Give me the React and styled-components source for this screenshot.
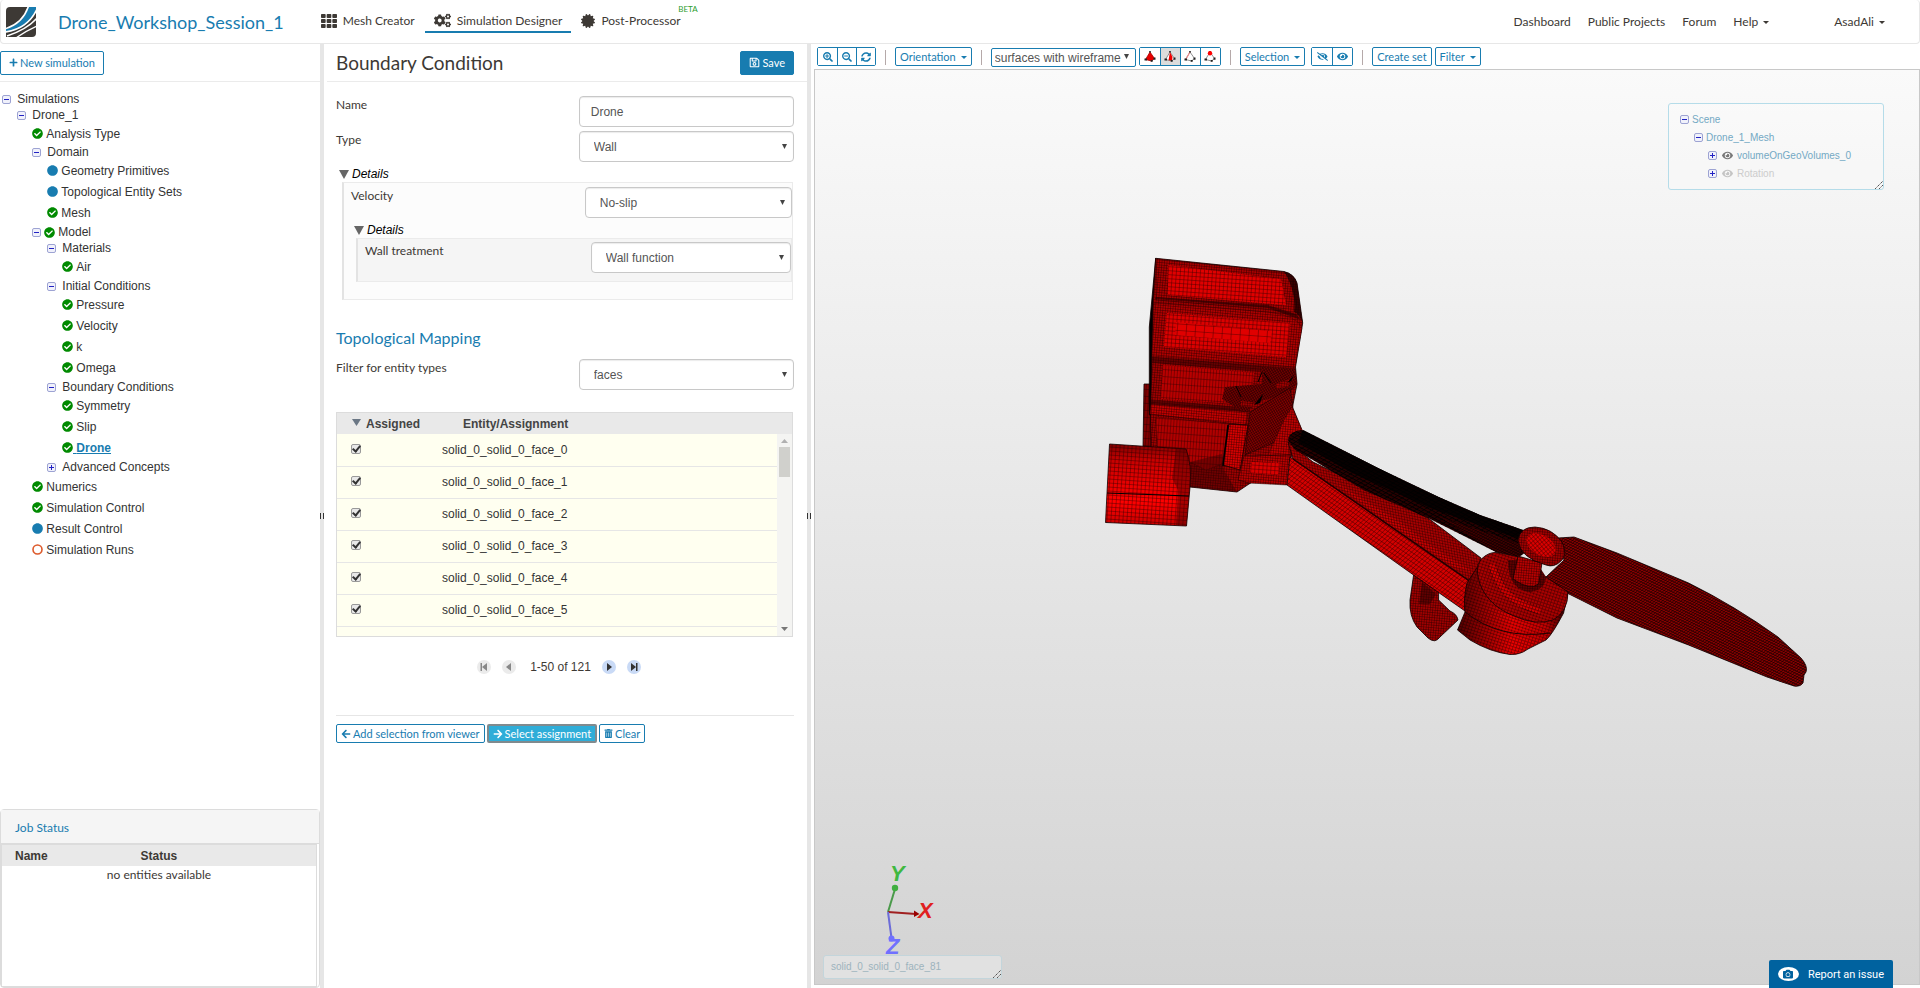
import { useState } from "react";
import styled, { createGlobalStyle, css } from "styled-components";
import {
  FaTh,
  FaCogs,
  FaCertificate,
  FaPlus,
  FaRegSave,
  FaCheckCircle,
  FaCircle,
  FaArrowLeft,
  FaArrowRight,
  FaTrashAlt,
  FaSearchPlus,
  FaSearchMinus,
  FaSyncAlt,
  FaEye,
  FaEyeSlash,
  FaCamera,
} from "react-icons/fa";

const tree = [
  {
    name: "Simulations",
    children: [
      {
        name: "Drone_1",
        children: [
          { name: "Analysis Type", status: "done" },
          {
            name: "Domain",
            children: [
              { name: "Geometry Primitives", status: "info" },
              { name: "Topological Entity Sets", status: "info" },
              { name: "Mesh", status: "done" },
            ],
          },
          {
            name: "Model",
            status: "done",
            children: [
              { name: "Materials", children: [{ name: "Air", status: "done" }] },
              {
                name: "Initial Conditions",
                children: [
                  { name: "Pressure", status: "done" },
                  { name: "Velocity", status: "done" },
                  { name: "k", status: "done" },
                  { name: "Omega", status: "done" },
                ],
              },
              {
                name: "Boundary Conditions",
                children: [
                  { name: "Symmetry", status: "done" },
                  { name: "Slip", status: "done" },
                  { name: "Drone", status: "done", active: true },
                ],
              },
              { name: "Advanced Concepts", closed: true },
            ],
          },
          { name: "Numerics", status: "done" },
          { name: "Simulation Control", status: "done" },
          { name: "Result Control", status: "info" },
          { name: "Simulation Runs", status: "open" },
        ],
      },
    ],
  },
];

const faces = [0, 1, 2, 3, 4, 5];

const StatusIcon = ({ status }) => {
  if (status === "done") return <FaCheckCircle color="#008a00" />;
  if (status === "info") return <FaCircle color="#187cb0" />;
  return (
    <svg viewBox="0 0 11 11" aria-hidden="true">
      <circle cx="5.500" cy="5.500" r="4.500" fill="none" stroke="#dd5a2b" strokeWidth="1.600" />
    </svg>
  );
};

const TreeNode = ({ node }) => {
  const folder = node.children || node.closed;
  return (
    <li>
      <TreeRow $folder={folder}>
        {folder && <Toggle aria-label={`Toggle ${node.name}`} $closed={node.closed} />}
        {node.status && <StatusIcon status={node.status} />}
        <TreeLink href="#" $active={node.active}>
          {"\u00a0"}
          {node.name}
        </TreeLink>
      </TreeRow>
      {node.children && (
        <TreeList>
          {node.children.map((child) => (
            <TreeNode key={child.name} node={child} />
          ))}
        </TreeList>
      )}
    </li>
  );
};

const Field = ({ id, label, options }) => (
  <FieldRow>
    <Label htmlFor={id}>{label}</Label>
    <SelectBox>
      <Select id={id}>
        {options.map((o) => (
          <option key={o}>{o}</option>
        ))}
      </Select>
      <Arrow />
    </SelectBox>
  </FieldRow>
);

const Arrow = () => (
  <ArrowSvg viewBox="0 0 6 6" aria-hidden="true">
    <path d="M0 0h6L3 6z" fill="#444" />
  </ArrowSvg>
);

const Triangle = () => (
  <svg width="10" height="9" viewBox="0 0 10 9" aria-hidden="true">
    <path d="M0 0h10L5 9z" fill="#666" />
  </svg>
);

const Logo = () => (
  <svg width="30" height="30" viewBox="0 0 30 30" aria-hidden="true">
    <clipPath id="logoClip">
      <path d="M4 0h26v26q0 4-4 4H0V4q0-4 4-4z" />
    </clipPath>
    <g clipPath="url(#logoClip)">
      <rect width="30" height="30" fill="#3d3935" />
      <path d="M0 22C12 19 19 11 22 0h8v2C26 15 15 24 0 25z" fill="#187cb0" />
      <path d="M0 21.500C11 18 19 10 22.500-1" fill="none" stroke="#fff" strokeWidth="1.600" />
      <path d="M-1 25C14 23 25 15 31 2" fill="none" stroke="#fff" strokeWidth="1.600" />
      <path d="M1 29C13 25 25 18 31 11" fill="none" stroke="#fff" strokeWidth="1.600" />
      <path d="M10 31C17 26 24 22 31 19" fill="none" stroke="#fff" strokeWidth="1.400" />
    </g>
  </svg>
);

// tetrahedron drawn on the pick mode buttons
const PickIcon = ({ mode }) => (
  <svg width="12" height="11" viewBox="0 0 12 11" aria-hidden="true">
    <path
      d="M6 1L1.500 8.500 7.500 10 10.500 7.500z"
      fill={mode === "volume" ? "#e80000" : "#fff"}
      stroke={mode === "volume" ? "#a00" : "#777"}
      strokeWidth=".8"
    />
    {mode === "face" && <path d="M6 1L4.500 9.200 8 9.800 8.500 6z" fill="#f00000" />}
    {mode === "edge" && <path d="M6 1L2 8" stroke="#e88" strokeWidth="1.200" />}
    <path d="M.5 7.500h2.500v2H.5zM6.700 9h2v1.800h-2zM9.500 6.500h2v2.300h-2zM5.200 0h1.600v1.500H5.200z" fill="#222" />
    {mode === "point" && <circle cx="6" cy="2.300" r="2.200" fill="#f00" />}
  </svg>
);

const PagerIcon = ({ end, back }) => (
  <svg width="8" height="8" viewBox="0 0 8 8" aria-hidden="true">
    <g transform={back ? "matrix(-1 0 0 1 8 0)" : undefined} fill="currentColor">
      <path d={end ? "M1 0l5 4-5 4z" : "M2 0l5 4-5 4z"} />
      {end && <path d="M6 0h1.500v8H6z" />}
    </g>
  </svg>
);

const Grip = () => (
  <GripSvg viewBox="0 0 9 9" aria-hidden="true">
    <path d="M1 9L9 1M5 9L9 5" stroke="#555" strokeWidth="1" strokeDasharray="1.500 .6" />
  </GripSvg>
);

const Grid = ({ id, w, h, angle, skew = 0, line = 0.7, alpha = 0.8 }) => (
  <pattern
    id={id}
    width={w}
    height={h}
    patternUnits="userSpaceOnUse"
    patternTransform={`rotate(${angle}) skewX(${skew})`}
  >
    <path d={`M0 0H${w}M0 0V${h}`} stroke="#000" strokeWidth={line * 2} opacity={alpha} />
  </pattern>
);

const Part = ({ d, fill, grid, edge = 0.8 }) => (
  <g>
    <path d={d} fill={fill} stroke="#100" strokeWidth={edge} strokeLinejoin="round" />
    {grid && <path d={d} fill={`url(#${grid})`} />}
  </g>
);

const DroneModel = () => (
  <ModelSvg viewBox="815 70 1104 914" preserveAspectRatio="xMidYMid meet" role="img" aria-label="Drone mesh">
    <defs>
      <Grid id="coarse" w={9} h={6.5} angle={4} line={0.4} alpha={0.75} />
      <Grid id="medium" w={4} h={4} angle={4} line={0.4} alpha={0.8} />
      <Grid id="fine" w={2.5} h={2.5} angle={5} line={0.4} alpha={0.75} />
      <Grid id="tall" w={3} h={7} angle={4} line={0.4} alpha={0.75} />
      <Grid id="dense" w={2.2} h={2.2} angle={-32} line={0.45} alpha={0.75} />
      <Grid id="arm" w={3.2} h={4} angle={34} skew={-12} line={0.4} alpha={0.75} />
      <Grid id="armTop" w={2.8} h={2.6} angle={12} skew={20} line={0.4} alpha={0.75} />
      <Grid id="blade" w={2.6} h={2.4} angle={26} skew={-25} line={0.55} alpha={0.85} />
      <Grid id="round" w={3.2} h={3} angle={18} line={0.4} alpha={0.75} />
      <Grid id="speckle" w={5} h={3} angle={28} skew={-30} line={0.9} alpha={1} />
      <linearGradient id="cylinder" x1="0" y1="0" x2="0" y2="1">
        <stop offset="0" stopColor="#800000" />
        <stop offset=".2" stopColor="#c80000" />
        <stop offset=".7" stopColor="#ff0000" />
        <stop offset="1" stopColor="#c80000" />
      </linearGradient>
      <linearGradient id="motor" x1="0" y1="0" x2="1" y2="0">
        <stop offset="0" stopColor="#500000" />
        <stop offset=".5" stopColor="#e80000" />
        <stop offset=".8" stopColor="#c00000" />
        <stop offset="1" stopColor="#300000" />
      </linearGradient>
    </defs>

    {/* fuselage */}
    <Part d="M1144 384H1151L1152 448 1143 447Z" fill="#800000" grid="tall" />
    <Part d="M1155.700 258L1149.300 327 1149.300 415 1156 415 1160 300Z" fill="#000" />
    <Part
      d="M1155.700 258.300L1284 271.500Q1294 274 1297 283L1302.700 323 1295.500 367 1297 384 1292.500 407 1302 430 1290 460 1249 484 1237 492 1190 487 1151 448 1150.500 415 1153 300Z"
      fill="#a00000"
      grid="fine"
    />
    <Part d="M1157 259L1284 272.500Q1292 275 1293 283L1298 315 1268 309 1156 300Z" fill="#a80000" grid="fine" edge={0.3} />
    <Part d="M1168 265L1281 279 1286 305 1262 303 1168 295Z" fill="#e00000" grid="medium" edge={0} />
    <path d="M1284 271.500Q1294 273 1297 283L1302.500 322Q1298 313 1294 312Q1296 290 1284 271.500Z" fill="#100" opacity=".7" />
    <path d="M1155 299L1268 308 1301 320 1296 314 1268 305 1156 297Z" fill="#200" opacity=".6" />
    <Part d="M1154 303L1268 312Q1298 316 1302 328L1295 367 1152 356Z" fill="#b00000" grid="fine" edge={0.3} />
    <Part d="M1167 313L1290 323 1286 357 1164 347Z" fill="#dc0000" grid="medium" edge={0} />
    <path d="M1176 322L1272 331 1270 343 1175 335Z" fill="#e00000" />
    <path d="M1176 322L1272 331 1270 343 1175 335Z" fill="url(#coarse)" />
    <path d="M1152 357L1295 368 1296 374 1152 363Z" fill="#200" opacity=".45" />
    <Part d="M1163 365L1254 373 1250 405 1161 399Z" fill="#b80000" grid="tall" edge={0} />
    <path d="M1151 400L1250 408 1250 412 1151 404Z" fill="#200" opacity=".5" />
    <path d="M1262 367L1295 369 1297 384 1290 393 1257 402 1246 414 1222 399 1225 387 1262 384Z" fill="#700000" />
    <path d="M1262 367L1295 369 1297 384 1290 393 1257 402 1246 414 1222 399 1225 387 1262 384Z" fill="url(#dense)" />
    <path d="M1241 401L1257 403 1254 407 1241 406ZM1276 384L1290 379 1288 387 1276 388Z" fill="#a00000" />
    <path d="M1241 401L1257 403 1254 407 1241 406ZM1276 384L1290 379 1288 387 1276 388Z" fill="url(#fine)" />
    <path d="M1254 405L1263 394 1260 403ZM1287 383L1294 375 1291 381Z" fill="#000" />
    <path d="M1264 373L1271 383M1236 386L1241 397M1262 372L1258 382" stroke="#000" strokeWidth="1" />
    <Part d="M1151 404L1248 412 1246 425 1150 414Z" fill="#c40000" grid="fine" edge={0.5} />
    <Part d="M1156 417L1229 424 1222 464 1206 470 1190 462 1157 447Z" fill="#b00000" grid="tall" edge={0.3} />
    <Part d="M1250 412L1290 388 1293 407 1280 440 1245 455Z" fill="#800000" grid="dense" edge={0.5} />
    <Part d="M1292 407L1302 430 1288 440 1290 455 1268 455 1276 438 1284 420Z" fill="#c00000" grid="fine" edge={0.3} />
    <path d="M1190 462L1222 454 1224 470 1237 492 1190 487Z" fill="#300" opacity=".45" />
    <Part d="M1229 424L1248 425 1240 470 1223 465Z" fill="#d80000" grid="fine" />
    <path d="M1228 425L1223 466" stroke="#000" strokeWidth="1.500" />
    <Part d="M1244 456L1290 455 1287 485 1249 483 1238 480Z" fill="#b80000" grid="fine" edge={0.5} />
    <path d="M1252 462L1280 463 1278 475 1250 473Z" fill="#d80000" />
    <path d="M1252 462L1280 463 1278 475 1250 473Z" fill="url(#medium)" />

    {/* camera barrel */}
    <Part d="M1109.500 444L1186 449Q1192 465 1190 487L1186.500 526 1105.500 522.500Z" fill="url(#cylinder)" grid="medium" />
    <path d="M1176 448L1186 449Q1192 465 1190 487L1186.500 526 1176 525 1178 490 1172 478Z" fill="#400" opacity=".45" />
    <path d="M1107 493L1189 496" stroke="#000" strokeWidth="1" />

    {/* arm */}
    <Part d="M1293 459L1288 442 1313 462 1428 518 1481 558 1478 580 1471 583Z" fill="#a80000" grid="armTop" />
    <path d="M1335 482L1400 522 1425 542 1474 573 1452 566 1390 525Z" fill="#e00000" opacity=".6" />
    <path d="M1335 482L1400 522 1425 542 1474 573 1452 566 1390 525Z" fill="url(#armTop)" />
    <Part d="M1413.600 575L1410 600Q1409 616 1417 627L1428 638Q1435 644 1440 637L1458 620Q1457 614 1450 611L1438.600 600 1438.600 592Z" fill="#a00000" grid="fine" />
    <path d="M1422 582L1436 594 1430 604 1419 604Z" fill="#200" opacity=".5" />
    <Part d="M1290 457L1293 459 1471 582 1465 611 1413.600 575 1287 485Z" fill="#d40000" grid="arm" />
    <path d="M1293 459L1471 582" stroke="#200" strokeWidth="1.500" />

    {/* left blade */}
    <path
      d="M1288 440Q1289 431 1303 430L1378 468 1438.600 497 1480 515 1523 530 1526 552 1519 557 1496 552 1428 518 1363.500 490 1313 460 1295 450Z"
      fill="#2a0000"
    />
    <path
      d="M1288 440Q1289 431 1303 430L1378 468 1438.600 497 1480 515 1523 530 1526 552 1519 557 1496 552 1428 518 1363.500 490 1313 460 1295 450Z"
      fill="url(#speckle)"
    />
    <path d="M1303 430L1378 468 1438.600 497 1480 515 1523 530 1522 540 1430 508 1350 472 1298 442Z" fill="#000" opacity=".8" />
    <path d="M1440 517L1523 545 1519 557 1496 552Z" fill="#400000" />
    <path d="M1440 517L1523 545 1519 557 1496 552Z" fill="url(#blade)" />

    {/* right blade */}
    <Part
      d="M1546 577L1564 560 1558 538 1574 537 1617 553 1688.600 583Q1735 606 1778 637L1801 658Q1808 666 1806 672L1804 675 1803 683Q1800 687 1794 686L1767 677 1688.600 645 1617 618 1567 593Z"
      fill="#8a0000"
      grid="blade"
    />

    {/* motor */}
    <Part
      d="M1478 566L1467 583Q1463 600 1465 612L1457.500 630 1470 640Q1490 652 1510 654.500 1520 655 1528 649L1546 640Q1552 635 1563.600 613L1568 592Z"
      fill="url(#motor)"
      grid="round"
    />
    <path d="M1465 612Q1500 640 1550 633" fill="none" stroke="#200" strokeWidth="1" />
    <Part
      d="M1478 577Q1475 562 1485 556 1492 551 1500 553L1519 557 1546 577 1568 592Q1568 612 1553 620 1536 626 1514 616 1484 604 1478 577Z"
      fill="#a80000"
      grid="round"
    />
    <path d="M1492 564Q1500 600 1540 611" fill="none" stroke="#f00000" strokeWidth="6" opacity=".6" />
    <path d="M1492 564Q1500 600 1540 611" fill="none" stroke="url(#round)" strokeWidth="8" />
    <path d="M1508 560Q1508 590 1530 592 1545 590 1546 577L1535 560Z" fill="#600000" />
    <path d="M1508 560Q1508 590 1530 592 1545 590 1546 577L1535 560Z" fill="url(#fine)" />
    <Part d="M1518 556L1542 563 1538.600 584Q1530 591 1513 579Z" fill="#b80000" grid="fine" />
    <Part
      d="M1518 540Q1520 527 1535 527 1552 528 1562 542 1568 555 1561 561 1554 568 1546 565 1520 558 1518 540Z"
      fill="#a00000"
      grid="fine"
    />
    <ellipse cx="1541" cy="545" rx="16" ry="10" fill="#dc0000" transform="rotate(32 1541 545)" />
    <ellipse cx="1541" cy="545" rx="16" ry="10" fill="url(#round)" transform="rotate(32 1541 545)" />

    {/* axis triad */}
    <g strokeWidth="2" fontFamily="Liberation Sans" fontWeight="700" fontStyle="italic" fontSize="22">
      <path d="M888 912L895 889" stroke="#4a9a4a" />
      <path d="M888 912L916 914" stroke="#a02020" />
      <path d="M888 912L891.500 938" stroke="#6c6cd8" />
      <circle cx="895" cy="888" r="3.200" fill="#3fae3f" />
      <path d="M914 910.500L919.500 914 914 917Z" fill="#900" />
      <circle cx="891.500" cy="938.500" r="3" fill="#7070ff" />
      <text x="890" y="881" fill="#40b840">Y</text>
      <text x="918" y="918" fill="#e02020">X</text>
      <text x="886" y="954" fill="#7070ff">Z</text>
    </g>
  </ModelSvg>
);

const App = () => {
  const [name, setName] = useState("Drone");
  return (
    <Page>
      <GlobalStyle />
      <Header>
        <Logo />
        <ProjectTitle>Drone_Workshop_Session_1</ProjectTitle>
        <Tabs>
          <Tab href="#">
            <FaTh size={16} />
            Mesh Creator
          </Tab>
          <Tab href="#" $active>
            <FaCogs size={17} />
            Simulation Designer
          </Tab>
          <Tab href="#">
            <FaCertificate size={14} />
            Post-Processor
            <Beta>BETA</Beta>
          </Tab>
        </Tabs>
        <UserNav>
          <NavLink href="#">Dashboard</NavLink>
          <NavLink href="#">Public Projects</NavLink>
          <NavLink href="#">Forum</NavLink>
          <NavLink href="#">
            Help
            <Caret />
          </NavLink>
          <NavLink href="#" $last>
            AsadAli
            <Caret />
          </NavLink>
        </UserNav>
      </Header>

      <Main>
        <Sidebar>
          <PanelHead>
            <Button $large>
              <FaPlus size={9} />
              New simulation
            </Button>
          </PanelHead>
          <TreeRoot>
            {tree.map((node) => (
              <TreeNode key={node.name} node={node} />
            ))}
          </TreeRoot>
          <JobPanel>
            <JobTitle>Job Status</JobTitle>
            <JobBody>
              <JobTable>
                <thead>
                  <tr>
                    <th>Name</th>
                    <th>Status</th>
                  </tr>
                </thead>
                <tbody>
                  <tr>
                    <td colSpan={2}>no entities available</td>
                  </tr>
                </tbody>
              </JobTable>
            </JobBody>
          </JobPanel>
        </Sidebar>
        <Splitter />

        <Settings>
          <PanelHead $inset>
            <PanelTitle>Boundary Condition</PanelTitle>
            <Button $large $primary>
              <FaRegSave size={11} />
              Save
            </Button>
          </PanelHead>
          <Form onSubmit={(e) => e.preventDefault()}>
            <FieldRow>
              <Label htmlFor="name">Name</Label>
              <TextInput id="name" value={name} onChange={(e) => setName(e.target.value)} />
            </FieldRow>
            <Field id="type" label="Type" options={["Wall"]} />
            <DetailsTitle>
              <Triangle />
              Details
            </DetailsTitle>
            <DetailsBox>
              <Field id="velocity" label="Velocity" options={["No-slip"]} />
              <DetailsTitle>
                <Triangle />
                Details
              </DetailsTitle>
              <DetailsBox $inner>
                <Field id="treatment" label="Wall treatment" options={["Wall function"]} />
              </DetailsBox>
            </DetailsBox>

            <SectionTitle>Topological Mapping</SectionTitle>
            <Field id="filter" label="Filter for entity types" options={["faces"]} />
            <EntityBox>
              <EntityTable>
                <thead>
                  <tr>
                    <th>
                      <svg width="9" height="7" viewBox="0 0 9 7" aria-hidden="true">
                        <path d="M0 0h9L4.500 7z" fill="#6b7785" />
                      </svg>
                      Assigned
                    </th>
                    <th>Entity/Assignment</th>
                  </tr>
                </thead>
                <tbody>
                  {faces.map((n) => (
                    <tr key={n}>
                      <td>
                        <Check type="checkbox" id={`face${n}`} defaultChecked />
                      </td>
                      <td>
                        <label htmlFor={`face${n}`}>{`solid_0_solid_0_face_${n}`}</label>
                      </td>
                    </tr>
                  ))}
                  <tr>
                    <td>
                      <Check type="checkbox" aria-label="Next face" defaultChecked />
                    </td>
                    <td />
                  </tr>
                </tbody>
              </EntityTable>
              <ScrollTrack>
                <svg width="7" height="4" viewBox="0 0 7 4">
                  <path d="M0 4h7L3.500 0z" fill="#b0b0b0" />
                </svg>
                <Thumb />
                <svg width="7" height="4" viewBox="0 0 7 4">
                  <path d="M0 0h7L3.500 4z" fill="#777" />
                </svg>
              </ScrollTrack>
            </EntityBox>
            <Pager>
              <PagerButton aria-label="First page" disabled>
                <PagerIcon end back />
              </PagerButton>
              <PagerButton aria-label="Previous page" disabled>
                <PagerIcon back />
              </PagerButton>
              <PagerText>1-50 of 121</PagerText>
              <PagerButton aria-label="Next page">
                <PagerIcon />
              </PagerButton>
              <PagerButton aria-label="Last page">
                <PagerIcon end />
              </PagerButton>
            </Pager>
            <Actions>
              <Button>
                <FaArrowLeft size={10} />
                Add selection from viewer
              </Button>
              <Button $pressed>
                <FaArrowRight size={10} />
                Select assignment
              </Button>
              <Button>
                <FaTrashAlt size={9} />
                Clear
              </Button>
            </Actions>
          </Form>
        </Settings>
        <Splitter />

        <Viewer>
          <Toolbar>
            <Group $size={19}>
              <button aria-label="Zoom in">
                <FaSearchPlus size={10} />
              </button>
              <button aria-label="Zoom out">
                <FaSearchMinus size={10} />
              </button>
              <button aria-label="Reset view">
                <FaSyncAlt size={10} />
              </button>
            </Group>
            <Separator />
            <Button>
              Orientation
              <Caret />
            </Button>
            <Separator />
            <ModeBox>
              <ModeSelect aria-label="Render mode">
                <option>surfaces with wireframe</option>
              </ModeSelect>
              <Arrow />
            </ModeBox>
            <Group $size={20}>
              <button aria-label="Pick volumes">
                <PickIcon mode="volume" />
              </button>
              <button aria-label="Pick faces" aria-pressed="true">
                <PickIcon mode="face" />
              </button>
              <button aria-label="Pick edges">
                <PickIcon mode="edge" />
              </button>
              <button aria-label="Pick points">
                <PickIcon mode="point" />
              </button>
            </Group>
            <Separator />
            <Button>
              Selection
              <Caret />
            </Button>
            <Group $size={20} $spaced>
              <button aria-label="Hide selection">
                <FaEyeSlash size={11} />
              </button>
              <button aria-label="Show all">
                <FaEye size={11} />
              </button>
            </Group>
            <Separator />
            <Button>Create set</Button>
            <Button>
              Filter
              <Caret />
            </Button>
          </Toolbar>
          <Canvas>
            <DroneModel />
            <ScenePanel>
              <SceneRow $level={0}>
                <Toggle aria-label="Toggle scene" />
                Scene
              </SceneRow>
              <SceneRow $level={1}>
                <Toggle aria-label="Toggle mesh" />
                Drone_1_Mesh
              </SceneRow>
              <SceneRow $level={2}>
                <Toggle aria-label="Toggle volume" $closed />
                <FaEye size={11} color="#777" />
                volumeOnGeoVolumes_0
              </SceneRow>
              <SceneRow $level={2} $muted>
                <Toggle aria-label="Toggle rotation" $closed />
                <FaEye size={11} color="#c4c4c4" />
                Rotation
              </SceneRow>
              <Grip />
            </ScenePanel>
            <PickedEntity>
              solid_0_solid_0_face_81
              <Grip />
            </PickedEntity>
          </Canvas>
        </Viewer>
      </Main>

      <ReportButton>
        <ReportBubble>
          <FaCamera size={10} />
        </ReportBubble>
        Report an issue
      </ReportButton>
    </Page>
  );
};

const GlobalStyle = createGlobalStyle`
  *, *::before, *::after {
    box-sizing: border-box;
  }
  body {
    margin: 0;
    background: #fff;
    color: #3d3935;
    font-family: Lato, sans-serif;
    font-size: 12px;
  }
  button, input, select {
    font: inherit;
    margin: 0;
  }
  ul {
    list-style: none;
    margin: 0;
    padding: 0;
  }
  a {
    color: inherit;
    text-decoration: none;
  }
  svg {
    flex: none;
  }
`;

const Page = styled.div`
  display: flex;
  flex-direction: column;
  min-height: 100vh;
`;

const Header = styled.header`
  display: flex;
  align-items: center;
  height: 44px;
  padding: 0 34px 0 5px;
  border: 1px solid #e7e7e7;
  border-top: 0;
  border-radius: 4px;
`;

const ProjectTitle = styled.h1`
  margin: 0 28px 0 22px;
  color: #187cb0;
  font-size: 18px;
  font-weight: 400;
  line-height: 24px;
`;

const Tabs = styled.nav`
  display: flex;
  gap: 1px;
`;

const Tab = styled.a`
  position: relative;
  display: flex;
  align-items: center;
  gap: 6px;
  height: 22px;
  padding: 0 9px;
  border-bottom: 2px solid ${(p) => (p.$active ? "#187cb0" : "transparent")};
`;

const Beta = styled.span`
  position: absolute;
  right: -8px;
  top: -7px;
  color: #2e9e2e;
  font-size: 8px;
  line-height: 10px;
`;

const UserNav = styled.nav`
  display: flex;
  gap: 17px;
  margin-left: auto;
`;

const NavLink = styled.a`
  display: flex;
  align-items: center;
  gap: 5px;
  margin-left: ${(p) => (p.$last ? "48px" : "0")};
`;

const Caret = styled.span`
  border: 3px solid transparent;
  border-top-color: currentColor;
  border-bottom: 0;
  margin-top: 2px;
`;

const Main = styled.main`
  display: flex;
  flex: 1;
`;

const Sidebar = styled.aside`
  display: flex;
  flex-direction: column;
  flex: 0 0 320px;
`;

const Splitter = styled.div`
  display: flex;
  align-items: center;
  flex: 0 0 4px;
  background: #e6e6e6;

  &::after {
    content: "";
    width: 4px;
    height: 6px;
    border: solid #333;
    border-width: 0 1px;
  }
`;

const PanelHead = styled.div`
  display: flex;
  align-items: center;
  justify-content: space-between;
  height: 38px;
  margin-left: ${(p) => (p.$inset ? "3px" : "0")};
  padding: ${(p) => (p.$inset ? "0 13px 0 9px" : "0")};
  border-bottom: 1px solid #ebebeb;
`;

const PanelTitle = styled.h2`
  margin: 0;
  font-size: 19px;
  font-weight: 400;
  line-height: 24px;
`;

const Button = styled.button`
  display: inline-flex;
  align-items: center;
  gap: 2px;
  height: 19px;
  padding: 0 4px;
  border: 1px solid #187cb0;
  border-radius: 2px;
  background: #fff;
  color: #187cb0;
  font-size: 11px;
  white-space: nowrap;

  ${Caret} {
    margin-left: 3px;
  }

  ${(p) =>
    p.$large &&
    css`
      height: 24px;
      padding: 0 8px;
    `}

  ${(p) =>
    p.$primary &&
    css`
      background: #187cb0;
      color: #fff;
    `}

  ${(p) =>
    p.$pressed &&
    css`
      border: 2px solid #808a8e;
      background: #2fadd8;
      color: #fff;
    `}
`;

const TreeRoot = styled.ul`
  flex: 1;
  padding: 9px 0 0 2px;
  font-family: "Liberation Sans", sans-serif;
`;

const TreeList = styled.ul`
  padding: 0 0 1px 15px;
`;

const TreeRow = styled.div`
  display: flex;
  align-items: center;
  height: ${(p) => (p.$folder ? "16px" : "21px")};

  svg {
    width: 11px;
    height: 11px;
  }
`;

const Toggle = styled.button`
  position: relative;
  flex: none;
  width: 9px;
  height: 9px;
  margin-right: 3px;
  padding: 0;
  border: 1px solid #9da3d3;
  border-radius: 2px;
  background: #f0f1fb;

  &::before,
  &::after {
    content: "";
    position: absolute;
    left: 1px;
    top: 3px;
    width: 5px;
    height: 1px;
    background: #2222c4;
  }

  &::after {
    transform: rotate(90deg);
    display: ${(p) => (p.$closed ? "block" : "none")};
  }
`;

const TreeLink = styled.a`
  color: ${(p) => (p.$active ? "#187cb0" : "#333")};
  font-weight: ${(p) => (p.$active ? "700" : "400")};
  text-decoration: ${(p) => (p.$active ? "underline" : "none")};
`;

const JobPanel = styled.section`
  display: flex;
  flex-direction: column;
  height: 179px;
  border: 1px solid #dcdcdc;
  border-radius: 4px;
`;

const JobTitle = styled.h3`
  margin: 0;
  padding: 2px 14px 0;
  border-bottom: 1px solid #dcdcdc;
  background: #f5f5f5;
  color: #187cb0;
  font-size: 12px;
  font-weight: 400;
  line-height: 31px;
`;

const JobBody = styled.div`
  flex: 1;
  margin-right: 2px;
  border: 1px solid #dcdcdc;
`;

const JobTable = styled.table`
  width: 100%;
  border-collapse: collapse;
  table-layout: fixed;

  th {
    height: 21px;
    padding: 0 13px;
    background: #e9e9e9;
    font-family: "Liberation Sans", sans-serif;
    text-align: left;
  }

  th:first-child {
    width: 40%;
  }

  td {
    padding: 1px 0;
    text-align: center;
  }
`;

const Settings = styled.section`
  flex: 0 0 483px;
`;

const Form = styled.form`
  padding: 14px 13px 0 12px;
`;

const FieldRow = styled.div`
  display: flex;
  align-items: flex-start;
  justify-content: space-between;
  margin-bottom: 4px;
`;

const Label = styled.label`
  line-height: 17px;
`;

const control = css`
  width: 100%;
  height: 31px;
  border: 1px solid #c8c8c8;
  border-radius: 4px;
  background: #fff;
  box-shadow: inset 0 1px 1px rgba(0, 0, 0, 0.08);
  color: #555;
  font-family: "Liberation Sans", sans-serif;
  appearance: none;
`;

const TextInput = styled.input`
  ${control}
  width: 47%;
  padding: 0 11px;
`;

const SelectBox = styled.div`
  position: relative;
  width: 47%;
`;

const Select = styled.select`
  ${control}
  padding: 0 14px;
`;

const ArrowSvg = styled.svg`
  position: absolute;
  right: 7px;
  top: calc(50% - 3px);
  width: 5px;
  height: 5px;
  pointer-events: none;
`;

const DetailsTitle = styled.div`
  display: flex;
  align-items: center;
  gap: 3px;
  height: 16px;
  margin-left: 3px;
  color: #000;
  font-family: "Liberation Sans", sans-serif;
  font-style: italic;
`;

const DetailsBox = styled.div`
  margin: 0 1px 0 6px;
  padding: 4px 0 17px 7px;
  border: 1px solid #ebebeb;
  border-left: 2px solid #e3e3e3;
  background: #fcfcfc;

  ${(p) =>
    p.$inner &&
    css`
      margin: 0 0 0 5px;
      padding: 3px 0 4px 7px;
      background: #f5f5f5;
    `}
`;

const SectionTitle = styled.h3`
  margin: 26px 0 9px;
  color: #187cb0;
  font-size: 16px;
  font-weight: 400;
  line-height: 24px;
`;

const EntityBox = styled.div`
  position: relative;
  height: 225px;
  margin: 22px 1px 0 0;
  overflow: hidden;
  border: 1px solid #dcdcdc;
`;

const EntityTable = styled.table`
  width: 100%;
  border-collapse: collapse;
  table-layout: fixed;
  color: #333;
  font-family: "Liberation Sans", sans-serif;

  th {
    height: 21px;
    padding: 0;
    background: #e9e9e9;
    color: #444;
    text-align: left;
  }

  th:first-child {
    width: 105px;
    padding-left: 15px;
  }

  th svg {
    margin: 0 5px 2px 0;
  }

  th:last-child {
    padding-left: 21px;
  }

  tbody tr {
    height: 32px;
    border-bottom: 1px solid #e6e6e6;
    background: #fffff0;
  }

  td {
    padding: 0;
  }

  td:first-child {
    padding: 0 0 2px 14px;
  }
`;

const Check = styled.input`
  position: relative;
  display: block;
  width: 10px;
  height: 10px;
  border: 1px solid #999;
  border-radius: 2px;
  background: #e8e8e8;
  appearance: none;

  &:checked::after {
    content: "";
    position: absolute;
    left: 2px;
    top: -1px;
    width: 5px;
    height: 8px;
    border: solid #333;
    border-width: 0 2px 2px 0;
    transform: rotate(40deg);
  }
`;

const ScrollTrack = styled.div`
  position: absolute;
  right: 0;
  top: 21px;
  bottom: 0;
  display: flex;
  flex-direction: column;
  align-items: center;
  width: 15px;
  padding: 5px 0;
  background: #f4f4f2;
`;

const Thumb = styled.div`
  width: 11px;
  height: 30px;
  margin: 4px 0 auto;
  background: #d0d0cc;
`;

const Pager = styled.div`
  display: flex;
  align-items: center;
  justify-content: center;
  gap: 11px;
  margin-top: 23px;
  padding-right: 12px;
`;

const PagerButton = styled.button`
  display: flex;
  align-items: center;
  justify-content: center;
  width: 14px;
  height: 14px;
  padding: 0;
  border: 0;
  border-radius: 50%;
  background: #c9daf6;
  color: #333;

  &:disabled {
    background: #ebebeb;
    color: #888;
  }
`;

const PagerText = styled.span`
  margin-left: 3px;
  font-family: "Liberation Sans", sans-serif;
`;

const Actions = styled.div`
  display: flex;
  gap: 2px;
  margin-top: 41px;
  padding-top: 8px;
  border-top: 1px solid #e6e6e6;
`;

const Viewer = styled.section`
  display: flex;
  flex-direction: column;
  flex: 1;
  min-width: 0;
  padding: 3px 0 3px 3px;
`;

const Toolbar = styled.div`
  display: flex;
  align-items: flex-start;
  gap: 3px;
  height: 22px;
  padding-left: 3px;
`;

const Group = styled.div`
  display: flex;
  border: 1px solid #187cb0;
  border-radius: 2px;
  margin-left: ${(p) => (p.$spaced ? "3px" : "0")};

  button {
    display: flex;
    align-items: center;
    justify-content: center;
    width: ${(p) => p.$size}px;
    height: 17px;
    padding: 0;
    border: 0;
    background: #fff;
    color: #187cb0;
  }

  button + button {
    border-left: 1px solid #187cb0;
  }

  button[aria-pressed="true"] {
    background: #dcdcdc;
  }
`;

const Separator = styled.span`
  width: 1px;
  height: 15px;
  margin: 3px 6px 0;
  background: #b5a9a9;
`;

const ModeBox = styled.div`
  position: relative;
  padding-top: 1px;
`;

const ModeSelect = styled.select`
  height: 19px;
  padding: 0 13px 0 3px;
  border: 1px solid #187cb0;
  border-radius: 2px;
  background: #fff;
  color: #555;
  font-family: "Liberation Sans", sans-serif;
  appearance: none;
`;

const Canvas = styled.div`
  position: relative;
  flex: 1;
  border: 1px solid #c8c8c8;
  background: linear-gradient(#fafafa, #d3d3d3);
`;

const ModelSvg = styled.svg`
  position: absolute;
  width: 100%;
  height: 100%;
`;

const GripSvg = styled.svg`
  position: absolute;
  right: 0;
  bottom: 0;
  width: 9px;
  height: 9px;
`;

const overlay = css`
  position: absolute;
  border: 1px solid #b5dce9;
  border-radius: 3px;
  font-family: "Liberation Sans", sans-serif;
  font-size: 10px;
`;

const ScenePanel = styled.div`
  ${overlay}
  top: 33px;
  right: 35px;
  width: 216px;
  padding: 6px 11px 7px;
  background: rgba(255, 255, 255, 0.2);
`;

const SceneRow = styled.div`
  display: flex;
  align-items: center;
  height: 18px;
  padding-left: ${(p) => p.$level * 14}px;
  color: ${(p) => (p.$muted ? "#ccc" : "#74a9c4")};

  svg {
    margin: 0 4px 0 2px;
  }
`;

const PickedEntity = styled.div`
  ${overlay}
  left: 8px;
  bottom: 5px;
  width: 179px;
  height: 24px;
  padding: 0 7px;
  border-color: #c3d5db;
  background: #e1e1e1;
  color: #9db3bd;
  line-height: 22px;
`;

const ReportButton = styled.button`
  position: fixed;
  right: 27px;
  bottom: 0;
  display: flex;
  align-items: center;
  gap: 9px;
  height: 28px;
  padding: 0 9px;
  border: 0;
  border-radius: 2px 2px 0 0;
  background: #00629f;
  color: #fff;
  font-family: Roboto, sans-serif;
  font-size: 11px;
`;

const ReportBubble = styled.span`
  display: flex;
  align-items: center;
  justify-content: center;
  width: 21px;
  height: 14px;
  border-radius: 50%;
  background: #fff;
  color: #00629f;
`;

export default App;
